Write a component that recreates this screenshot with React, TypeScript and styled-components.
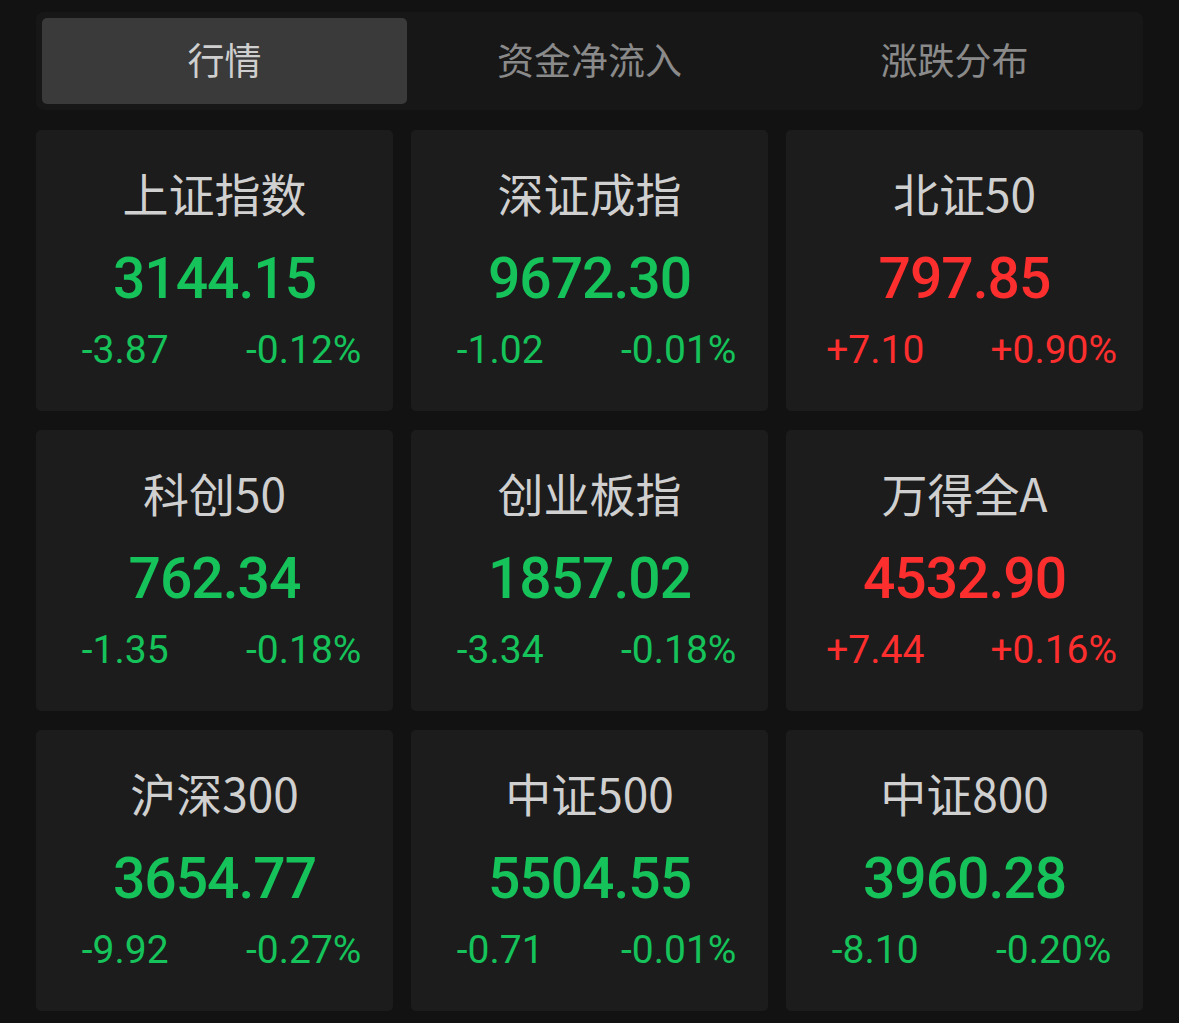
import { useState } from "react";
import styled, { createGlobalStyle } from "styled-components";

const GlobalStyle = createGlobalStyle`
  html, body {
    margin: 0;
    padding: 0;
    background: #121212;
  }
  body {
    font-family: Roboto, "Noto Sans CJK SC", sans-serif;
  }
`;

const UP = "#fd2e2e";
const DOWN = "#15c35a";

type Quote = {
  name: string;
  price: string;
  change: string;
  pct: string;
};

const quotes: Quote[] = [
  { name: "上证指数", price: "3144.15", change: "-3.87", pct: "-0.12%" },
  { name: "深证成指", price: "9672.30", change: "-1.02", pct: "-0.01%" },
  { name: "北证50", price: "797.85", change: "+7.10", pct: "+0.90%" },
  { name: "科创50", price: "762.34", change: "-1.35", pct: "-0.18%" },
  { name: "创业板指", price: "1857.02", change: "-3.34", pct: "-0.18%" },
  { name: "万得全A", price: "4532.90", change: "+7.44", pct: "+0.16%" },
  { name: "沪深300", price: "3654.77", change: "-9.92", pct: "-0.27%" },
  { name: "中证500", price: "5504.55", change: "-0.71", pct: "-0.01%" },
  { name: "中证800", price: "3960.28", change: "-8.10", pct: "-0.20%" },
];

const tabs = ["行情", "资金净流入", "涨跌分布"];

// page wrapper
const Page = styled.div`
  padding: 12px 36px 13px;
  display: flex;
  flex-direction: column;
  gap: 20px;
`;

const TabBar = styled.div`
  display: grid;
  grid-template-columns: repeat(3, 1fr);
  padding: 6px;
  background: #171717;
  border-radius: 8px;
`;

const Tab = styled.button<{ $active: boolean }>`
  height: 86px;
  border: none;
  border-radius: 5px;
  background: ${(p) => (p.$active ? "#3a3a3a" : "transparent")};
  color: ${(p) => (p.$active ? "#cfcfcf" : "#8a8a8a")};
  font-family: "Noto Sans CJK SC", sans-serif;
  font-size: 37px;
  line-height: 80px;
  cursor: pointer;
  padding: 0 0 4px;
`;

const Grid = styled.div`
  display: grid;
  grid-template-columns: repeat(3, 1fr);
  column-gap: 18px;
  row-gap: 19px;
`;

const Card = styled.div`
  height: 281px;
  box-sizing: border-box;
  padding-top: 34px;
  background: #1c1c1c;
  border-radius: 5px;
  display: flex;
  flex-direction: column;
  align-items: center;
`;

const Name = styled.div`
  height: 56px;
  line-height: 56px;
  font-family: "Noto Sans CJK SC", sans-serif;
  font-size: 46px;
  color: #d0d0d0;
  white-space: nowrap;
`;

const Price = styled.div<{ $color: string }>`
  margin-top: 27px;
  height: 64px;
  line-height: 64px;
  font-size: 57px;
  font-weight: 500;
  letter-spacing: -1px;
  color: ${(p) => p.$color};
`;

const ChangeRow = styled.div`
  margin-top: 15px;
  width: 100%;
  display: grid;
  grid-template-columns: 1fr 1fr;
`;

const ChangeValue = styled.span<{ $color: string }>`
  height: 48px;
  line-height: 48px;
  text-align: center;
  font-size: 39px;
  color: ${(p) => p.$color};
`;

function QuoteCard({ q }: { q: Quote }) {
  const color = q.change.startsWith("+") ? UP : DOWN;
  return (
    <Card>
      <Name>{q.name}</Name>
      <Price $color={color}>{q.price}</Price>
      <ChangeRow>
        <ChangeValue $color={color}>{q.change}</ChangeValue>
        <ChangeValue $color={color}>{q.pct}</ChangeValue>
      </ChangeRow>
    </Card>
  );
}

export default function App() {
  const [active, setActive] = useState(0);
  return (
    <>
      <GlobalStyle />
      <Page>
        <TabBar>
          {tabs.map((t, i) => (
            <Tab key={t} $active={i === active} onClick={() => setActive(i)}>
              {t}
            </Tab>
          ))}
        </TabBar>
        <Grid>
          {quotes.map((q) => (
            <QuoteCard key={q.name} q={q} />
          ))}
        </Grid>
      </Page>
    </>
  );
}
